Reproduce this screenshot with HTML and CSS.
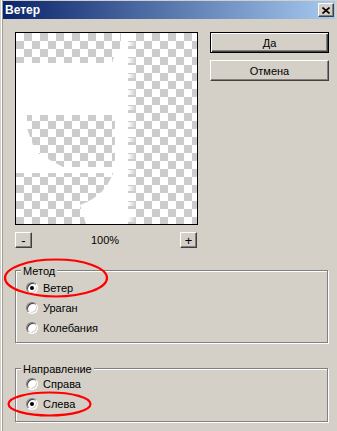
FILE: index.html
```html
<!DOCTYPE html>
<html>
<head>
    <title>Ветер</title>
    <link rel="stylesheet" href="styles.css">
</head>
<body>
<div class="window">
    <div class="titlebar">
        <span class="title">Ветер</span>
        <span class="close-btn">
            <svg width="8" height="7" viewBox="0 0 8 7">
                <path d="M0.5 0.5 L7.5 6.5 M7.5 0.5 L0.5 6.5" stroke="#000" stroke-width="1.6"/>
            </svg>
        </span>
    </div>
    <div class="content">
        <div class="top">
            <div class="preview-col">
                <div class="preview">
                    <svg width="181" height="191" viewBox="0 0 181 191">
                        <defs>
                            <pattern id="checker" width="16" height="16" patternUnits="userSpaceOnUse">
                                <rect width="16" height="16" fill="#fff"/>
                                <rect x="8" y="0" width="8" height="8" fill="#ccc"/>
                                <rect x="0" y="8" width="8" height="8" fill="#ccc"/>
                            </pattern>
                            <linearGradient id="streak" x1="0" x2="1" y1="0" y2="0">
                                <stop offset="0" stop-color="#fff" stop-opacity="1"/>
                                <stop offset="1" stop-color="#fff" stop-opacity="0"/>
                            </linearGradient>
                        </defs>
                        <rect width="181" height="191" fill="url(#checker)"/>
                        <!-- wind-smeared white shape -->
                        <g fill="#fff">
                            <rect x="105" y="0" width="7" height="191"/>
                            <rect x="0" y="30" width="112" height="52"/>
                            <polygon points="96,30 98,24 103,18 105,15 105,30"/>
                            <rect x="0" y="82" width="11" height="58"/>
                            <polygon points="11,95 15,107 20,119 34,127 47,134 11,134"/>
                            <rect x="0" y="134" width="100" height="6"/>
                            <path d="M99,82 H105 V191 H70 L64,172 Q92,162 99,134 Z"/>
                        </g>
                        <g fill="url(#streak)">
                            <rect x="112" y="9" width="8" height="4"/>
                            <rect x="112" y="25" width="8" height="5"/>
                            <rect x="112" y="41" width="8" height="4"/>
                            <rect x="112" y="57" width="8" height="5"/>
                            <rect x="112" y="73" width="8" height="4"/>
                            <rect x="112" y="89" width="8" height="5"/>
                            <rect x="112" y="105" width="8" height="4"/>
                            <rect x="112" y="121" width="8" height="5"/>
                            <rect x="112" y="137" width="8" height="4"/>
                            <rect x="112" y="153" width="8" height="5"/>
                            <rect x="112" y="169" width="8" height="4"/>
                            <rect x="112" y="184" width="8" height="5"/>
                        </g>
                    </svg>
                </div>
                <div class="zoom-row">
                    <span class="btn zoom-btn">-</span>
                    <span class="zoom-value">100%</span>
                    <span class="btn zoom-btn">+</span>
                </div>
            </div>
            <div class="actions">
                <span class="btn default">Да</span>
                <span class="btn">Отмена</span>
            </div>
        </div>

        <div class="group group-method">
            <span class="legend">Метод</span>
            <label class="radio-row"><span class="radio checked"></span>Ветер</label>
            <label class="radio-row"><span class="radio"></span>Ураган</label>
            <label class="radio-row"><span class="radio"></span>Колебания</label>
        </div>

        <div class="group group-direction">
            <span class="legend">Направление</span>
            <label class="radio-row"><span class="radio"></span>Справа</label>
            <label class="radio-row"><span class="radio checked"></span>Слева</label>
        </div>
    </div>

    <!-- red annotation marks drawn over the dialog -->
    <svg class="marks" width="337" height="431" viewBox="0 0 337 431">
        <ellipse cx="56" cy="278" rx="51" ry="18.5" fill="none" stroke="#f00" stroke-width="2.2"/>
        <ellipse cx="49.5" cy="404" rx="41" ry="11.5" fill="none" stroke="#f00" stroke-width="2.2"/>
    </svg>
</div>
</body>
</html>
```

FILE: styles.css
```css
body {
    margin: 0;
    background-color: #d4d0c8;
    font-family: "Liberation Sans", Arial, sans-serif;
    font-size: 11px;
    color: #000;
}

.window {
    position: relative;
    width: 337px;
    height: 431px;
    box-sizing: border-box;
    padding: 1px 2px 0 3px;
    background-color: #d4d0c8;
    box-shadow: inset 1px 0 #d4d0c8, inset 2px 0 #fff, inset 3px 0 #a09c94;
}

.titlebar {
    height: 18px;
    display: flex;
    align-items: center;
    justify-content: space-between;
    padding: 0 1px 0 2px;
    background: linear-gradient(to right, #0a246a, #a6caf0);
    color: #fff;
}

.title {
    font-weight: bold;
    font-size: 12px;
}

.close-btn {
    width: 16px;
    height: 14px;
    box-sizing: border-box;
    display: flex;
    align-items: center;
    justify-content: center;
    background-color: #d4d0c8;
    border: 1px solid;
    border-color: #fff #404040 #404040 #fff;
    box-shadow: inset -1px -1px #808080;
}

.content {
    padding: 13px 0 0 12px;
}

.top {
    display: flex;
}

.preview-col {
    width: 183px;
}

.preview {
    width: 181px;
    height: 191px;
    border: 1px solid #000;
}

.preview svg {
    display: block;
}

.zoom-row {
    width: 182px;
    margin-top: 7px;
    display: flex;
    align-items: center;
    justify-content: space-between;
}

.btn {
    display: flex;
    align-items: center;
    justify-content: center;
    box-sizing: border-box;
    width: 119px;
    height: 21px;
    background-color: #d4d0c8;
    border: 1px solid;
    border-color: #fff #404040 #404040 #fff;
    box-shadow: inset -1px -1px #808080;
}

.btn.default {
    border-color: #000;
    box-shadow: inset 1px 1px #fff, inset -1px -1px #404040, inset -2px -2px #808080;
}

.zoom-btn {
    width: 17px;
    height: 16px;
    font-size: 13px;
    line-height: 1;
}

.zoom-value {
    padding-right: 2px;
}

.actions {
    margin-left: 12px;
    display: flex;
    flex-direction: column;
    gap: 7px;
}

.group {
    position: relative;
    width: 313px;
    box-sizing: border-box;
    border: 1px solid #808080;
    box-shadow: 1px 1px 0 #fff, inset 1px 1px 0 #fff;
}

.group-method {
    margin-top: 22px;
    padding: 7px 0 4px 10px;
}

.group-direction {
    margin-top: 25px;
    padding: 5px 0 7px 10px;
}

.legend {
    position: absolute;
    top: -6px;
    left: 5px;
    padding: 0 2px;
    line-height: 13px;
    background-color: #d4d0c8;
}

.radio-row {
    display: flex;
    align-items: center;
    height: 20px;
}

.radio {
    position: relative;
    width: 12px;
    height: 12px;
    box-sizing: border-box;
    margin-right: 5px;
    border-radius: 50%;
    border: 1px solid;
    border-color: #808080 #fff #fff #808080;
    background-color: #fff;
    box-shadow: inset 1px 1px 0 #404040, inset -1px -1px 0 #d4d0c8;
}

.radio.checked::after {
    content: "";
    position: absolute;
    left: 3px;
    top: 3px;
    width: 4px;
    height: 4px;
    border-radius: 50%;
    background-color: #000;
}

.marks {
    position: absolute;
    left: 0;
    top: 0;
    pointer-events: none;
}
```
